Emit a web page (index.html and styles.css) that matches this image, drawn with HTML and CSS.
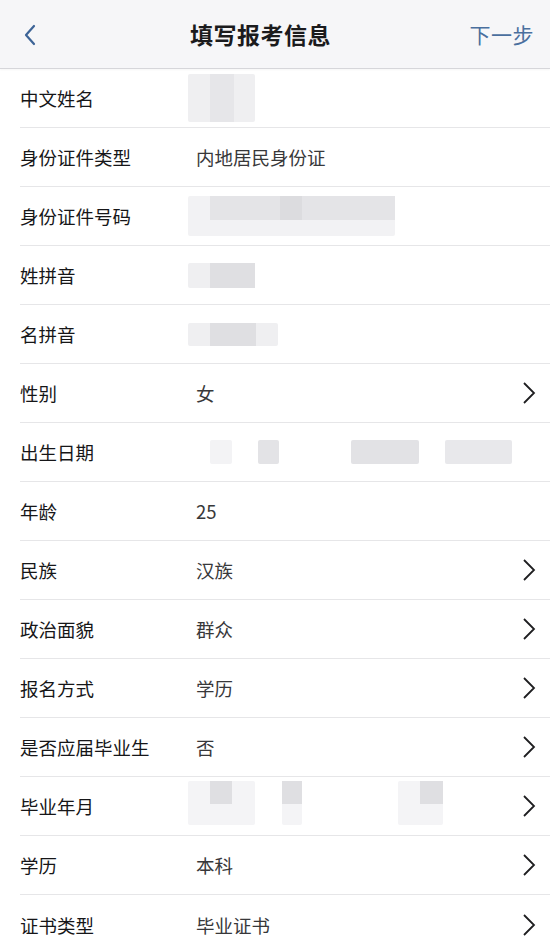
FILE: index.html
```html
<!DOCTYPE html>
<html lang="zh-CN">
<head>
    <meta charset="UTF-8">
    <meta name="viewport" content="width=device-width, initial-scale=1.0">
    <title>填写报考信息</title>
    <link rel="stylesheet" href="styles.css">
</head>
<body>
    <div class="page">
        <header class="nav">
            <a class="nav-back" href="#">
                <svg width="14" height="22" viewBox="0 0 14 22"><path d="M11 2 L3 11 L11 20" fill="none" stroke="#3d6497" stroke-width="2.2" stroke-linecap="round" stroke-linejoin="round"/></svg>
            </a>
            <h1 class="nav-title">填写报考信息</h1>
            <a class="nav-next" href="#">下一步</a>
        </header>

        <div class="form">
            <div class="row">
                <span class="label">中文姓名</span>
                <span class="value">
                    <span class="blur blur-name"><span class="blur-dark"></span></span>
                </span>
            </div>
            <div class="row">
                <span class="label">身份证件类型</span>
                <span class="value">内地居民身份证</span>
            </div>
            <div class="row">
                <span class="label">身份证件号码</span>
                <span class="value">
                    <span class="blur blur-id"><span class="blur-band"><span class="blur-dark"></span></span></span>
                </span>
            </div>
            <div class="row">
                <span class="label">姓拼音</span>
                <span class="value">
                    <span class="blur blur-py1"><span class="blur-dark"></span></span>
                </span>
            </div>
            <div class="row">
                <span class="label">名拼音</span>
                <span class="value">
                    <span class="blur blur-py2"><span class="blur-dark"></span></span>
                </span>
            </div>
            <div class="row">
                <span class="label">性别</span>
                <span class="value">女</span>
                <svg class="arrow" width="14" height="24" viewBox="0 0 14 24"><path d="M2 2 L12 12 L2 22" fill="none" stroke="#1e1e20" stroke-width="1.8"/></svg>
            </div>
            <div class="row">
                <span class="label">出生日期</span>
                <span class="value dates">
                    <span class="blur blur-d1"></span>
                    <span class="blur blur-d2"></span>
                    <span class="blur blur-d3"></span>
                    <span class="blur blur-d4"></span>
                </span>
            </div>
            <div class="row">
                <span class="label">年龄</span>
                <span class="value">25</span>
            </div>
            <div class="row">
                <span class="label">民族</span>
                <span class="value">汉族</span>
                <svg class="arrow" width="14" height="24" viewBox="0 0 14 24"><path d="M2 2 L12 12 L2 22" fill="none" stroke="#1e1e20" stroke-width="1.8"/></svg>
            </div>
            <div class="row">
                <span class="label">政治面貌</span>
                <span class="value">群众</span>
                <svg class="arrow" width="14" height="24" viewBox="0 0 14 24"><path d="M2 2 L12 12 L2 22" fill="none" stroke="#1e1e20" stroke-width="1.8"/></svg>
            </div>
            <div class="row">
                <span class="label">报名方式</span>
                <span class="value">学历</span>
                <svg class="arrow" width="14" height="24" viewBox="0 0 14 24"><path d="M2 2 L12 12 L2 22" fill="none" stroke="#1e1e20" stroke-width="1.8"/></svg>
            </div>
            <div class="row">
                <span class="label">是否应届毕业生</span>
                <span class="value">否</span>
                <svg class="arrow" width="14" height="24" viewBox="0 0 14 24"><path d="M2 2 L12 12 L2 22" fill="none" stroke="#1e1e20" stroke-width="1.8"/></svg>
            </div>
            <div class="row">
                <span class="label">毕业年月</span>
                <span class="value grad">
                    <span class="blur blur-g1"><span class="blur-dark"></span></span>
                    <span class="blur blur-g2"><span class="blur-dark"></span></span>
                    <span class="blur blur-g3"><span class="blur-dark"></span></span>
                </span>
                <svg class="arrow" width="14" height="24" viewBox="0 0 14 24"><path d="M2 2 L12 12 L2 22" fill="none" stroke="#1e1e20" stroke-width="1.8"/></svg>
            </div>
            <div class="row">
                <span class="label">学历</span>
                <span class="value">本科</span>
                <svg class="arrow" width="14" height="24" viewBox="0 0 14 24"><path d="M2 2 L12 12 L2 22" fill="none" stroke="#1e1e20" stroke-width="1.8"/></svg>
            </div>
            <div class="row">
                <span class="label">证书类型</span>
                <span class="value">毕业证书</span>
                <svg class="arrow" width="14" height="24" viewBox="0 0 14 24"><path d="M2 2 L12 12 L2 22" fill="none" stroke="#1e1e20" stroke-width="1.8"/></svg>
            </div>
        </div>
    </div>
</body>
</html>
```

FILE: styles.css
```css
* {
    margin: 0;
    padding: 0;
    box-sizing: border-box;
    font-family: "Noto Sans CJK SC", "Noto Sans", sans-serif;
}

body {
    background: #fff;
}

.page {
    width: 550px;
    height: 952px;
    overflow: hidden;
}

/* top bar */
.nav {
    height: 69px;
    background: #f6f6f8;
    border-bottom: 1px solid #d6d6da;
    box-shadow: 0 1px 2px rgba(0, 0, 0, 0.04);
    display: flex;
    align-items: center;
    padding: 0 16px 0 23px;
}

.nav-back {
    display: flex;
    width: 60px;
    padding-top: 1px;
}

.nav-title {
    flex: 1;
    text-align: center;
    font-size: 23px;
    font-weight: 700;
    color: #1b1b1d;
    letter-spacing: 0.5px;
    padding-right: 28px;
}

.nav-next {
    width: 68px;
    text-align: right;
    font-size: 21px;
    color: #4a6f9e;
    text-decoration: none;
    letter-spacing: 0.5px;
}

/* rows */
.row {
    height: 59px;
    margin-left: 20px;
    border-bottom: 1px solid #e6e6e8;
    display: flex;
    align-items: center;
    padding-right: 14px;
}

.row:last-child {
    border-bottom: 0;
}

.label {
    width: 176px;
    font-size: 18.5px;
    color: #161618;
}

.value {
    flex: 1;
    display: flex;
    align-items: center;
    font-size: 18.5px;
    color: #38383a;
}

.arrow {
    display: block;
}

/* blurred personal data */
.blur {
    display: flex;
    background: #efeff1;
    border-radius: 2px;
}

.blur-dark {
    display: block;
    background: #dfdfe2;
}

.blur-name {
    width: 67px;
    height: 48px;
    margin-left: -8px;
}

.blur-name .blur-dark {
    width: 24px;
    margin-left: 22px;
    background: #e6e6e9;
}

.blur-id {
    width: 207px;
    height: 40px;
    margin-left: -8px;
    align-items: flex-start;
    background: #f2f2f4;
}

.blur-band {
    display: flex;
    width: 185px;
    height: 24px;
    margin-left: 22px;
    background: #e4e4e7;
}

.blur-band .blur-dark {
    width: 22px;
    margin-left: 70px;
    background: #dcdcdf;
}

.blur-py1 {
    width: 67px;
    height: 25px;
    margin-left: -8px;
}

.blur-py1 .blur-dark {
    width: 45px;
    margin-left: 22px;
}

.blur-py2 {
    width: 90px;
    height: 23px;
    margin-left: -8px;
}

.blur-py2 .blur-dark {
    width: 46px;
    margin-left: 22px;
}

.dates .blur {
    height: 24px;
}

.blur-d1 {
    width: 22px;
    margin-left: 14px;
    background: #f3f3f5;
}

.blur-d2 {
    width: 21px;
    margin-left: 26px;
    background: #e3e3e6;
}

.blur-d3 {
    width: 68px;
    margin-left: 72px;
    background: #e2e2e5;
}

.blur-d4 {
    width: 67px;
    margin-left: 26px;
    background: #e8e8eb;
}

.grad {
    align-items: flex-start;
    padding-bottom: 6px;
}

.grad .blur {
    height: 44px;
    background: #f4f4f6;
}

.grad .blur-dark {
    height: 23px;
}

.blur-g1 {
    width: 67px;
    margin-left: -8px;
}

.blur-g1 .blur-dark {
    width: 22px;
    margin-left: 22px;
}

.blur-g2 {
    width: 20px;
    margin-left: 27px;
}

.blur-g2 .blur-dark {
    width: 20px;
}

.blur-g3 {
    width: 45px;
    margin-left: 96px;
}

.blur-g3 .blur-dark {
    width: 23px;
    margin-left: 22px;
}
```
